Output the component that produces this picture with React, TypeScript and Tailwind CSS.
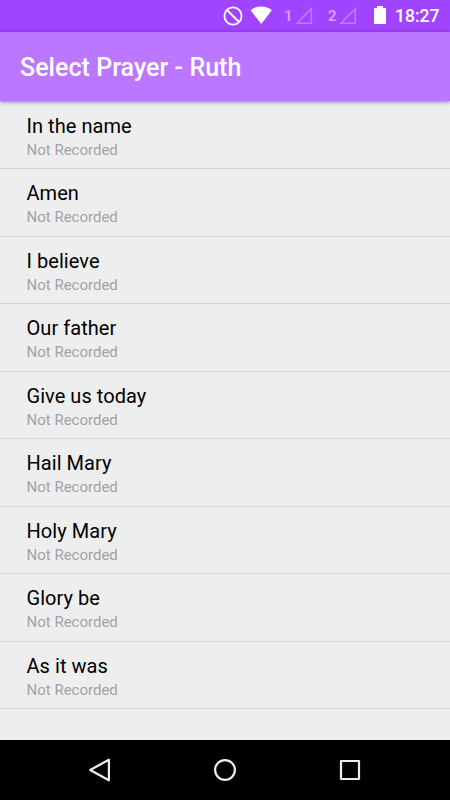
const prayers = [
  "In the name",
  "Amen",
  "I believe",
  "Our father",
  "Give us today",
  "Hail Mary",
  "Holy Mary",
  "Glory be",
  "As it was",
];

export default function App() {
  return (
    <div className="flex h-[800px] w-[450px] flex-col overflow-hidden bg-[#eeeeee] font-['Roboto',sans-serif]">
      <StatusBar />
      <header className="z-10 flex h-[69.5px] shrink-0 items-center bg-[#bb77ff] pl-5 shadow-[0_1px_4px_rgba(0,0,0,.45)]">
        <h1 className="pt-[2.5px] text-[25px] leading-[30px] font-medium tracking-[0.04px] whitespace-nowrap text-white">
          Select Prayer - Ruth
        </h1>
      </header>
      <main className="min-h-0 flex-1 pt-[0.5px]">
        <ul>
          {prayers.map((name) => (
            <PrayerRow key={name} name={name} />
          ))}
        </ul>
      </main>
      <NavigationBar />
    </div>
  );
}

function PrayerRow({ name }: { name: string }) {
  return (
    <li className="h-[67.5px] border-b border-[#d6d6d6] pt-[11.75px] pl-[26.5px]">
      <p className="text-[20px] leading-6 tracking-[0.05px] text-black">{name}</p>
      <p className="mt-[2px] text-[15px] leading-5 text-[#a3a3a3]">Not Recorded</p>
    </li>
  );
}

function StatusBar() {
  return (
    <div className="flex h-[31.75px] shrink-0 items-start bg-[#a144ff] pl-[223px] text-white">
      <svg viewBox="0 0 20 20" className="mt-[6px] h-5 w-5" fill="none" stroke="currentColor" strokeWidth="1.8">
        <circle cx="10" cy="10" r="8.6" />
        <path d="M4 4l12 12" />
      </svg>
      <svg viewBox="0 0 22 18" className="mt-[6px] ml-[7px] h-[18px] w-[22px]" fill="currentColor">
        <path d="M11.300 18L.6 4.300C3.500 1.700 7.300.5 11.300.5s7.500 1.200 10.500 3.800z" />
      </svg>
      <Signal sim="1" className="ml-[12px]" />
      <Signal sim="2" className="ml-[15px]" />
      <svg viewBox="0 0 12 18" className="mt-[6px] ml-[17px] h-[18px] w-3" fill="currentColor">
        <path d="M3 0h6v2h2q1 0 1 1v14q0 1-1 1H1q-1 0-1-1V3q0-1 1-1h2z" />
      </svg>
      <span className="mt-[6px] ml-[9px] text-[17.5px] leading-5 font-medium">18:27</span>
    </div>
  );
}

function Signal({ sim, className }: { sim: string; className: string }) {
  return (
    <div className={`flex w-[29px] ${className}`}>
      <span className="mt-[6px] w-[11px] text-[15px] leading-5 font-bold text-[#cf9fff]">{sim}</span>
      <svg
        viewBox="0 0 18 18"
        className="mt-[6px] h-[18px] w-[18px] shrink-0 text-[#bd7cff]"
        fill="none"
        stroke="currentColor"
        strokeWidth="1.500"
      >
        <path d="M1.900 17.200L16.300 2.600v14.600z" />
      </svg>
    </div>
  );
}

function NavigationBar() {
  return (
    <nav className="flex h-[60px] shrink-0 items-center justify-center gap-[101px] bg-black text-[#eeeeee]">
      <button aria-label="Back">
        <svg viewBox="0 0 24 24" className="h-6 w-6" fill="none" stroke="currentColor" strokeWidth="2.200" strokeLinejoin="round">
          <path d="M2.200 12L20.900 1.700v20.600z" />
        </svg>
      </button>
      <button aria-label="Home">
        <svg viewBox="0 0 24 24" className="h-6 w-6" fill="none" stroke="currentColor" strokeWidth="2.200">
          <circle cx="12" cy="12" r="9.900" />
        </svg>
      </button>
      <button aria-label="Overview">
        <svg viewBox="0 0 24 24" className="h-6 w-6" fill="none" stroke="currentColor" strokeWidth="2.200" strokeLinejoin="round">
          <path d="M3 3h18v18H3z" />
        </svg>
      </button>
    </nav>
  );
}
